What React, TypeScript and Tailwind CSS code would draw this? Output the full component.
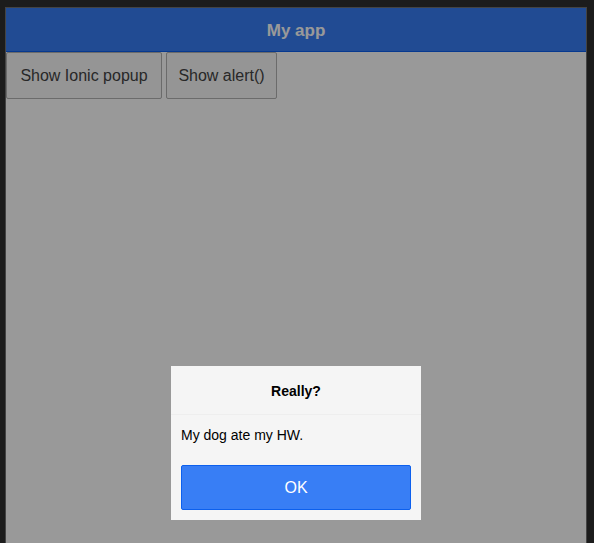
import React from 'react';

const font = { fontFamily: '"Liberation Sans", Arial, sans-serif' };

export default function App() {
  return (
    <div className="h-screen w-full overflow-hidden bg-[#1c1c1c] pl-[5px] pt-[7px]" style={font}>
      <div className="relative h-[600px] w-[582px] border border-[#444444] bg-white">
        <div className="flex h-[44px] items-center justify-center border-b border-[#0c60ee] bg-[#387ef5] pt-[2px]">
          <h1 className="text-[17px] font-bold text-white">My app</h1>
        </div>
        <div className="flex gap-1">
          <button className="h-[47px] w-[156px] rounded-[2px] border border-[#b2b2b2] bg-[#f8f8f8] text-[16px] text-[#444444]">
            Show Ionic popup
          </button>
          <button className="h-[47px] w-[111px] rounded-[2px] border border-[#b2b2b2] bg-[#f8f8f8] text-[16px] text-[#444444]">
            Show alert()
          </button>
        </div>

        {/* backdrop */}
        <div className="absolute inset-0 bg-black/40" />

        {/* popup */}
        <div className="absolute left-[165px] top-[358px] w-[250px] bg-[#f5f5f5]">
          <div className="border-b border-[#eeeeee] px-[10px] pb-[14px] pt-[17px] text-center">
            <h3 className="text-[14px] font-bold leading-[17px] text-[#000000]">Really?</h3>
          </div>
          <div className="p-[10px] text-[14px] leading-[20px] text-[#000000]">My dog ate my HW.</div>
          <div className="p-[10px]">
            <button className="h-[45px] w-full rounded-[2px] border border-[#0c60ee] bg-[#387ef5] text-[16px] text-white">
              OK
            </button>
          </div>
        </div>
      </div>
    </div>
  );
}
